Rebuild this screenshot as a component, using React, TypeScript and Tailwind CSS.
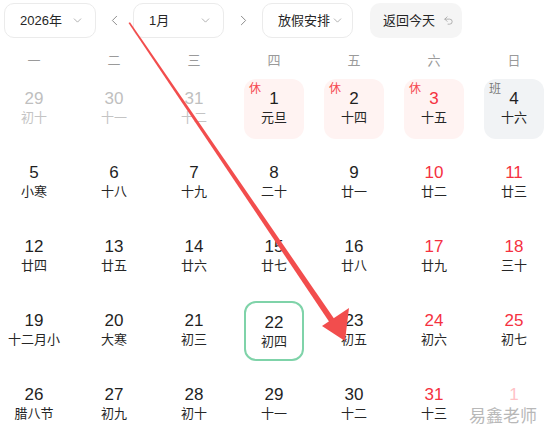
import React from "react";
import { ChevronDown, ChevronLeft, ChevronRight, Undo2 } from "lucide-react";

type Cell = {
  d: string;
  l: string;
  kind?: "dim" | "red" | "next";
  tag?: "休" | "班";
  today?: boolean;
};

const weeks: Cell[][] = [
  [
    { d: "29", l: "初十", kind: "dim" },
    { d: "30", l: "十一", kind: "dim" },
    { d: "31", l: "十二", kind: "dim" },
    { d: "1", l: "元旦", tag: "休" },
    { d: "2", l: "十四", tag: "休" },
    { d: "3", l: "十五", tag: "休", kind: "red" },
    { d: "4", l: "十六", tag: "班" },
  ],
  [
    { d: "5", l: "小寒" },
    { d: "6", l: "十八" },
    { d: "7", l: "十九" },
    { d: "8", l: "二十" },
    { d: "9", l: "廿一" },
    { d: "10", l: "廿二", kind: "red" },
    { d: "11", l: "廿三", kind: "red" },
  ],
  [
    { d: "12", l: "廿四" },
    { d: "13", l: "廿五" },
    { d: "14", l: "廿六" },
    { d: "15", l: "廿七" },
    { d: "16", l: "廿八" },
    { d: "17", l: "廿九", kind: "red" },
    { d: "18", l: "三十", kind: "red" },
  ],
  [
    { d: "19", l: "十二月小" },
    { d: "20", l: "大寒" },
    { d: "21", l: "初三" },
    { d: "22", l: "初四", today: true },
    { d: "23", l: "初五" },
    { d: "24", l: "初六", kind: "red" },
    { d: "25", l: "初七", kind: "red" },
  ],
  [
    { d: "26", l: "腊八节" },
    { d: "27", l: "初九" },
    { d: "28", l: "初十" },
    { d: "29", l: "十一" },
    { d: "30", l: "十二" },
    { d: "31", l: "十三", kind: "red" },
    { d: "1", l: "", kind: "next" },
  ],
];

const weekdays = ["一", "二", "三", "四", "五", "六", "日"];

function DayCell({ c }: { c: Cell }) {
  let box = "relative w-[60px] h-[60px] rounded-[12px] flex flex-col items-center pt-[10px]";
  if (c.tag === "休") box += " bg-[#fff3f2]";
  else if (c.tag === "班") box += " bg-[#f1f3f5]";
  if (c.today) box += " border-2 border-[#7fd3a9] pt-[8px]";

  let num = "text-[17px] leading-[20px] text-[#1f1f1f]";
  let lun = "text-[13px] leading-[18px] text-[#262626] whitespace-nowrap";
  if (c.kind === "dim") {
    num = "text-[17px] leading-[20px] text-[#bfbfbf]";
    lun = "text-[13px] leading-[18px] text-[#c4c4c4] whitespace-nowrap";
  } else if (c.kind === "red") {
    num = "text-[17px] leading-[20px] text-[#f5313f]";
  } else if (c.kind === "next") {
    num = "text-[17px] leading-[20px] text-[#ffc2c6]";
  }

  return (
    <div className="flex justify-center">
      <div className={box}>
        {c.tag === "休" && (
          <span className="absolute left-[5px] top-[3px] text-[12px] leading-[14px] text-[#f5484f]">休</span>
        )}
        {c.tag === "班" && (
          <span className="absolute left-[5px] top-[3px] text-[12px] leading-[14px] text-[#7a7a7a]">班</span>
        )}
        <div className={num}>{c.d}</div>
        {c.l && <div className={lun}>{c.l}</div>}
      </div>
    </div>
  );
}

export default function App() {
  return (
    <div
      className="relative w-[546px] h-[439px] overflow-hidden bg-white"
      style={{ fontFamily: '"Liberation Sans", "Noto Sans CJK SC", sans-serif' }}
    >
      {/* toolbar */}
      <div className="flex items-center pt-[3px] pl-[4px] h-[38px]">
        <div className="flex items-center w-[92px] h-[35px] rounded-[10px] border border-[#ebebeb] pl-[15px] pr-[11px] justify-between">
          <span className="text-[13px] text-[#262626] whitespace-nowrap">2026年</span>
          <ChevronDown size={13} strokeWidth={1.4} color="#9a9a9a" />
        </div>
        <div className="w-[37px] flex justify-center">
          <ChevronLeft size={17} strokeWidth={1.4} color="#8c8c8c" />
        </div>
        <div className="flex items-center w-[91px] h-[35px] rounded-[10px] border border-[#ebebeb] pl-[15px] pr-[11px] justify-between">
          <span className="text-[13px] text-[#262626]">1月</span>
          <ChevronDown size={13} strokeWidth={1.4} color="#9a9a9a" />
        </div>
        <div className="w-[38px] flex justify-center">
          <ChevronRight size={17} strokeWidth={1.4} color="#8c8c8c" />
        </div>
        <div className="flex items-center w-[91px] h-[35px] rounded-[10px] border border-[#ebebeb] pl-[15px] pr-[8px] justify-between">
          <span className="text-[13px] text-[#262626] whitespace-nowrap">放假安排</span>
          <ChevronDown size={13} strokeWidth={1.4} color="#9a9a9a" />
        </div>
        <div className="ml-[17px] flex items-center w-[92px] h-[35px] rounded-[10px] bg-[#f5f5f5] pl-[13px] gap-[8px]">
          <span className="text-[13px] text-[#262626] whitespace-nowrap">返回今天</span>
          <Undo2 size={11} strokeWidth={1.6} color="#9a9a9a" />
        </div>
      </div>

      {/* weekdays */}
      <div className="ml-[-6px] w-[560px] grid grid-cols-7 mt-[12px] h-[22px] items-center">
        {weekdays.map((w) => (
          <div key={w} className="text-center text-[13px] text-[#9a9a9a]">
            {w}
          </div>
        ))}
      </div>

      {/* days */}
      <div className="ml-[-6px] w-[560px] flex flex-col gap-[14px] mt-[7px]">
        {weeks.map((wk, i) => (
          <div key={i} className="grid grid-cols-7">
            {wk.map((c, j) => (
              <DayCell key={j} c={c} />
            ))}
          </div>
        ))}
      </div>

      {/* watermark */}
      <div
        className="absolute left-[469px] top-[406px] text-[17px] leading-[22px] text-[#b8b8b8]"
        style={{ textShadow: "0 0 2px #fff, 1px 1px 1px #fff" }}
      >
        易鑫老师
      </div>

      {/* annotation arrow */}
      <svg className="absolute left-0 top-0 pointer-events-none" width="546" height="439">
        <polygon points="128.5,23 130,22.2 335,320 330,323" fill="#f24d4d" />
        <polygon points="345,341 322,326 349,308" fill="#f24d4d" />
      </svg>
    </div>
  );
}
